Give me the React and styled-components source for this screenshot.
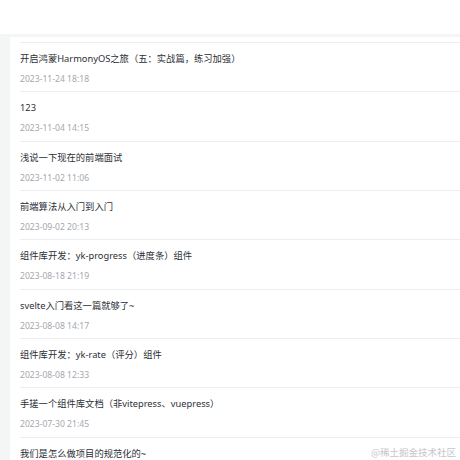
import React from 'react';
import styled, { createGlobalStyle } from 'styled-components';

const GlobalStyle = createGlobalStyle`
    html, body {
        margin: 0;
        padding: 0;
        height: 460px;
        overflow: hidden;
        background: #fff;
        font-family: "Noto Sans", "Noto Sans CJK SC", sans-serif;
    }
`;

const Page = styled.div`
    position: relative;
    width: 460px;
    height: 460px;
    overflow: hidden;
    background: #fff;
`;

const TopBar = styled.div`
    height: 34px;
    background: #fff;
`;

const Main = styled.div`
    background: #f4f5f5;
    padding: 3px 0 0 10px;
    height: 423px;
`;

const Card = styled.div`
    background: #fff;
    padding-left: 10px;
    height: 100%;
    padding-top: 5px;
    box-sizing: border-box;
`;

const List = styled.ul`
    list-style: none;
    margin: 0;
    padding: 0;
`;

const Item = styled.li`
    border-top: 1px solid #eceef1;
    padding: 9px 0 5.33px;
    display: flex;
    flex-direction: column;
    gap: 6px;
`;

const Title = styled.div`
    font-size: 9.3px;
    line-height: 14px;
    color: #2b2f36;
    white-space: nowrap;
`;

const Date = styled.div`
    font-size: 8.6px;
    line-height: 14px;
    color: #a3a7ae;
`;

const Watermark = styled.div`
    position: absolute;
    right: 4px;
    bottom: 2px;
    font-size: 9.5px;
    line-height: 12px;
    color: #c4c6ca;
    font-family: "Noto Sans CJK SC", sans-serif;
`;

const posts = [
    { title: '开启鸿蒙HarmonyOS之旅（五：实战篇，练习加强）', date: '2023-11-24 18:18' },
    { title: '123', date: '2023-11-04 14:15' },
    { title: '浅说一下现在的前端面试', date: '2023-11-02 11:06' },
    { title: '前端算法从入门到入门', date: '2023-09-02 20:13' },
    { title: '组件库开发：yk-progress（进度条）组件', date: '2023-08-18 21:19' },
    { title: 'svelte入门看这一篇就够了~', date: '2023-08-08 14:17' },
    { title: '组件库开发：yk-rate（评分）组件', date: '2023-08-08 12:33' },
    { title: '手搓一个组件库文档（非vitepress、vuepress）', date: '2023-07-30 21:45' },
    { title: '我们是怎么做项目的规范化的~' },
];

const App = () => {
    return (
        <Page>
            <GlobalStyle />
            <TopBar />
            <Main>
                <Card>
                    <List>
                        {posts.map((p) => (
                            <Item key={p.title}>
                                <Title>{p.title}</Title>
                                {p.date && <Date>{p.date}</Date>}
                            </Item>
                        ))}
                    </List>
                </Card>
            </Main>
            <Watermark>@稀土掘金技术社区</Watermark>
        </Page>
    );
};

export default App;
